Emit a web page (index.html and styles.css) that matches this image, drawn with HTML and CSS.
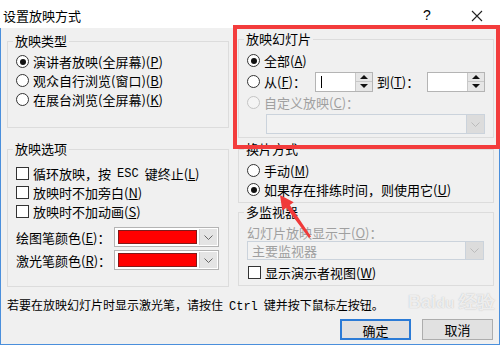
FILE: index.html
```html
<!DOCTYPE html>
<html>
<head>
    <title>设置放映方式</title>
    <link rel="stylesheet" href="styles.css">
</head>
<body>
    <div class="titlebar">
        <span class="title">设置放映方式</span>
        <span class="help">?</span>
        <span class="close">
            <svg width="12" height="12" viewBox="0 0 12 12"><path d="M1 1L11 11M11 1L1 11" stroke="#222" stroke-width="1.1" fill="none"/></svg>
        </span>
    </div>

    <div class="dialog">
        <div class="main">
            <div class="col col-left">
                <fieldset class="group g-type">
                    <legend>放映类型</legend>
                    <div class="row"><span class="radio on"></span>演讲者放映(全屏幕)(<u>P</u>)</div>
                    <div class="row"><span class="radio"></span>观众自行浏览(窗口)(<u>B</u>)</div>
                    <div class="row"><span class="radio"></span>在展台浏览(全屏幕)(<u>K</u>)</div>
                </fieldset>

                <fieldset class="group g-options">
                    <legend>放映选项</legend>
                    <div class="row"><span class="check"></span>循环放映，按<span class="mono key">ESC</span>键终止(<u>L</u>)</div>
                    <div class="row"><span class="check"></span>放映时不加旁白(<u>N</u>)</div>
                    <div class="row"><span class="check"></span>放映时不加动画(<u>S</u>)</div>
                    <div class="color-row first">
                        <span class="color-label">绘图笔颜色(<u>E</u>)：</span>
                        <span class="colorpick"><span class="swatch"></span><span class="drop-btn"><svg width="9" height="5" viewBox="0 0 9 5"><path d="M0.5 0.5L4.5 4.5L8.5 0.5" stroke="#666" fill="none"/></svg></span></span>
                    </div>
                    <div class="color-row">
                        <span class="color-label">激光笔颜色(<u>R</u>)：</span>
                        <span class="colorpick"><span class="swatch"></span><span class="drop-btn"><svg width="9" height="5" viewBox="0 0 9 5"><path d="M0.5 0.5L4.5 4.5L8.5 0.5" stroke="#666" fill="none"/></svg></span></span>
                    </div>
                </fieldset>
            </div>

            <div class="col col-right">
                <fieldset class="group g-slides">
                    <legend>放映幻灯片</legend>
                    <div class="row tall"><span class="radio on"></span>全部(<u>A</u>)</div>
                    <div class="row tall">
                        <span class="radio"></span>从(<u>F</u>)：
                        <span class="spin first-spin"><span class="caret"></span><span class="spin-btns"><span class="up"></span><span class="down"></span></span></span>
                        <span class="to">到(<u>T</u>)：</span>
                        <span class="spin"><span class="spin-btns"><span class="up"></span><span class="down"></span></span></span>
                    </div>
                    <div class="row tall disabled"><span class="radio off"></span>自定义放映(<u>C</u>)：</div>
                    <div class="select disabled-select custom">
                        <span class="select-text"></span>
                        <span class="drop-btn"><svg width="9" height="5" viewBox="0 0 9 5"><path d="M0.5 0.5L4.5 4.5L8.5 0.5" stroke="#bbb" fill="none"/></svg></span>
                    </div>
                </fieldset>

                <fieldset class="group g-advance">
                    <legend>换片方式</legend>
                    <div class="row"><span class="radio"></span>手动(<u>M</u>)</div>
                    <div class="row"><span class="radio on"></span>如果存在排练时间，则使用它(<u>U</u>)</div>
                </fieldset>

                <fieldset class="group g-monitor">
                    <legend>多监视器</legend>
                    <div class="row short disabled">幻灯片放映显示于(<u>O</u>)：</div>
                    <div class="select disabled-select monitor">
                        <span class="select-text">主要监视器</span>
                        <span class="drop-btn"><svg width="9" height="5" viewBox="0 0 9 5"><path d="M0.5 0.5L4.5 4.5L8.5 0.5" stroke="#bbb" fill="none"/></svg></span>
                    </div>
                    <div class="row presenter"><span class="check"></span>显示演示者视图(<u>W</u>)</div>
                </fieldset>
            </div>
        </div>

        <p class="hint">若要在放映幻灯片时显示激光笔，请按住<span class="mono key">Ctrl</span>键并按下鼠标左按钮。</p>

        <div class="buttons">
            <button class="btn btn-default">确定</button>
            <button class="btn">取消</button>
        </div>
    </div>

    <!-- annotation overlays -->
    <div class="mark-box"></div>
    <svg class="mark-arrow" width="500" height="345" viewBox="0 0 500 345">
        <polygon points="280,195 293.7,202.3 289.8,205 311,236.6 309,238 286.4,207.8 282.3,210.5" fill="#f03a3a"/>
    </svg>
    <div class="watermark">
        <span class="wm-logo">Bai<span class="wm-du">du</span> 经验</span>
    </div>
</body>
</html>
```

FILE: styles.css
```css
body {
    margin: 0;
    width: 500px;
    height: 345px;
    overflow: hidden;
    position: relative;
    background-color: #f0f0f0;
    font-family: "Noto Sans CJK SC", "Noto Sans", sans-serif;
    font-size: 12px;
    color: #000;
}

u {
    text-decoration: underline;
    text-underline-offset: 1px;
}

.mono {
    font-family: "Liberation Mono", monospace;
    font-size: 12px;
}

.key {
    margin: 0 6px;
}

/* title bar */
.titlebar {
    height: 28px;
    background-color: #fff;
    display: flex;
    align-items: center;
    font-size: 13px;
}

.title {
    flex: 1;
    padding-left: 3px;
    padding-top: 2px;
}

.help {
    width: 20px;
    text-align: center;
    font-family: "Liberation Sans", sans-serif;
    font-size: 14px;
    margin-right: 34px;
    padding-top: 2px;
}

.close {
    width: 14px;
    display: flex;
    margin-right: 15px;
    padding-top: 3px;
}

/* dialog body */
.dialog {
    height: 317px;
    box-sizing: border-box;
    border-left: 1px solid #4a8fdc;
    border-right: 1px solid #4a8fdc;
    border-bottom: 1px solid #4a8fdc;
    padding: 5px 5px 0 6px;
}

.main {
    display: flex;
    gap: 9px;
}

.col {
    display: flex;
    flex-direction: column;
}

.col-left {
    width: 222px;
}

.col-right {
    width: 256px;
    margin-top: -2px;
}

.group {
    margin: 0;
    padding: 3px 8px 0 8px;
    border: 1px solid #dcdcdc;
    box-sizing: border-box;
    min-width: 0;
}

.group legend {
    padding: 0 2px;
    margin-left: -3px;
    line-height: 16px;
    font-size: 13px;
}

.g-type {
    height: 95px;
}

.g-options {
    height: 146px;
    margin-top: 13px;
    padding-top: 7px;
}

.g-slides {
    height: 107px;
}

.g-advance {
    height: 62px;
    margin-top: 3px;
    padding-top: 4px;
}

.g-monitor {
    height: 82px;
    margin-top: 1px;
    padding-top: 3px;
}

.row {
    height: 19px;
    display: flex;
    align-items: center;
    white-space: nowrap;
    font-size: 13px;
}

.row.tall {
    height: 21px;
}

.row.short {
    height: 18px;
}

.disabled {
    color: #a0a0a0;
}

/* radio + checkbox */
.radio {
    width: 11px;
    height: 11px;
    border: 1px solid #333;
    border-radius: 50%;
    background-color: #fff;
    margin-right: 4px;
    display: flex;
    align-items: center;
    justify-content: center;
    flex-shrink: 0;
}

.radio.on::after {
    content: "";
    width: 6px;
    height: 6px;
    border-radius: 50%;
    background-color: #111;
}

.radio.off {
    border-color: #c4c4c4;
    background-color: #f4f4f4;
}

.check {
    width: 11px;
    height: 11px;
    border: 1px solid #333;
    background-color: #fff;
    margin-right: 4px;
    flex-shrink: 0;
}

/* pen colours */
.color-row {
    height: 20px;
    display: flex;
    align-items: center;
    margin-top: 3px;
    font-size: 13px;
}

.color-row.first {
    margin-top: 6px;
}

.color-label {
    width: 98px;
}

.colorpick {
    width: 105px;
    height: 20px;
    box-sizing: border-box;
    border: 1px solid #b4b4b4;
    background-color: #fff;
    display: flex;
    padding: 2px 1px 2px 3px;
}

.swatch {
    flex: 1;
    background-color: #ff0000;
    border: 1px solid #7f1a1a;
    margin-right: 2px;
}

.drop-btn {
    width: 17px;
    background-color: #e4e4e4;
    border-left: 1px solid #d0d0d0;
    display: flex;
    align-items: center;
    justify-content: center;
}

.colorpick .drop-btn {
    margin: -1px 0;
}

/* spin boxes */
.spin {
    width: 58px;
    height: 20px;
    box-sizing: border-box;
    border: 1px solid #b4b4b4;
    background-color: #fff;
    display: flex;
    justify-content: space-between;
}

.spin.first-spin {
    margin-left: 9px;
}

.caret {
    width: 1px;
    height: 12px;
    background-color: #000;
    margin: 3px 0 0 5px;
}

.spin-btns {
    width: 16px;
    margin-left: auto;
    display: flex;
    flex-direction: column;
    border-left: 1px solid #c8c8c8;
}

.spin-btns span {
    flex: 1;
    background-color: #e6e6e6;
    position: relative;
}

.spin-btns .up {
    border-bottom: 1px solid #c8c8c8;
}

.spin-btns .up::after,
.spin-btns .down::after {
    content: "";
    position: absolute;
    left: 4px;
    border-left: 4px solid transparent;
    border-right: 4px solid transparent;
}

.spin-btns .up::after {
    top: 2px;
    border-bottom: 4px solid #111;
}

.spin-btns .down::after {
    top: 2px;
    border-top: 4px solid #111;
}

.to {
    margin-left: 4px;
    width: 51px;
}

/* disabled selects */
.select {
    height: 20px;
    box-sizing: border-box;
    display: flex;
}

.disabled-select {
    border: 1px solid #cbd3dc;
    background-color: #f2f2f2;
    color: #a0a0a0;
    font-size: 13px;
}

.select-text {
    flex: 1;
    padding-left: 4px;
    line-height: 18px;
}

.select.custom {
    margin: 1px 0 0 19px;
}

.select.monitor {
    height: 19px;
    margin-right: 1px;
}

.select .drop-btn {
    background-color: #dcdcdc;
    border-left: 1px solid #cbd3dc;
}

.row.presenter {
    height: 20px;
    margin-top: 2px;
}

.row.presenter .check {
    margin-left: 1px;
}

/* footer */
.hint {
    margin: 10px 0 0 0;
    line-height: 16px;
    font-size: 12px;
    white-space: nowrap;
}

.buttons {
    display: flex;
    justify-content: flex-end;
    gap: 11px;
    margin-top: 4px;
    padding-right: 1px;
}

.btn {
    width: 71px;
    height: 21px;
    padding: 0;
    font-family: inherit;
    font-size: 13px;
    background-color: #e1e1e1;
    border: 1px solid #adadad;
    color: #000;
}

.btn-default {
    border: 2px solid #2b7bd6;
}

/* annotations */
.mark-box {
    position: absolute;
    left: 233px;
    top: 25px;
    width: 267px;
    height: 124px;
    box-sizing: border-box;
    border: 4px solid #f33c3c;
}

.mark-arrow {
    position: absolute;
    left: 0;
    top: 0;
}

.watermark {
    position: absolute;
    left: 408px;
    top: 291px;
    color: rgba(255, 255, 255, 0.75);
    text-shadow: 0 0 1px rgba(120, 120, 120, 0.5);
    pointer-events: none;
}

.wm-logo {
    font-family: "Liberation Sans", sans-serif;
    font-size: 18px;
    font-weight: bold;
    line-height: 22px;
}

.wm-du {
    font-size: 15px;
}
```
